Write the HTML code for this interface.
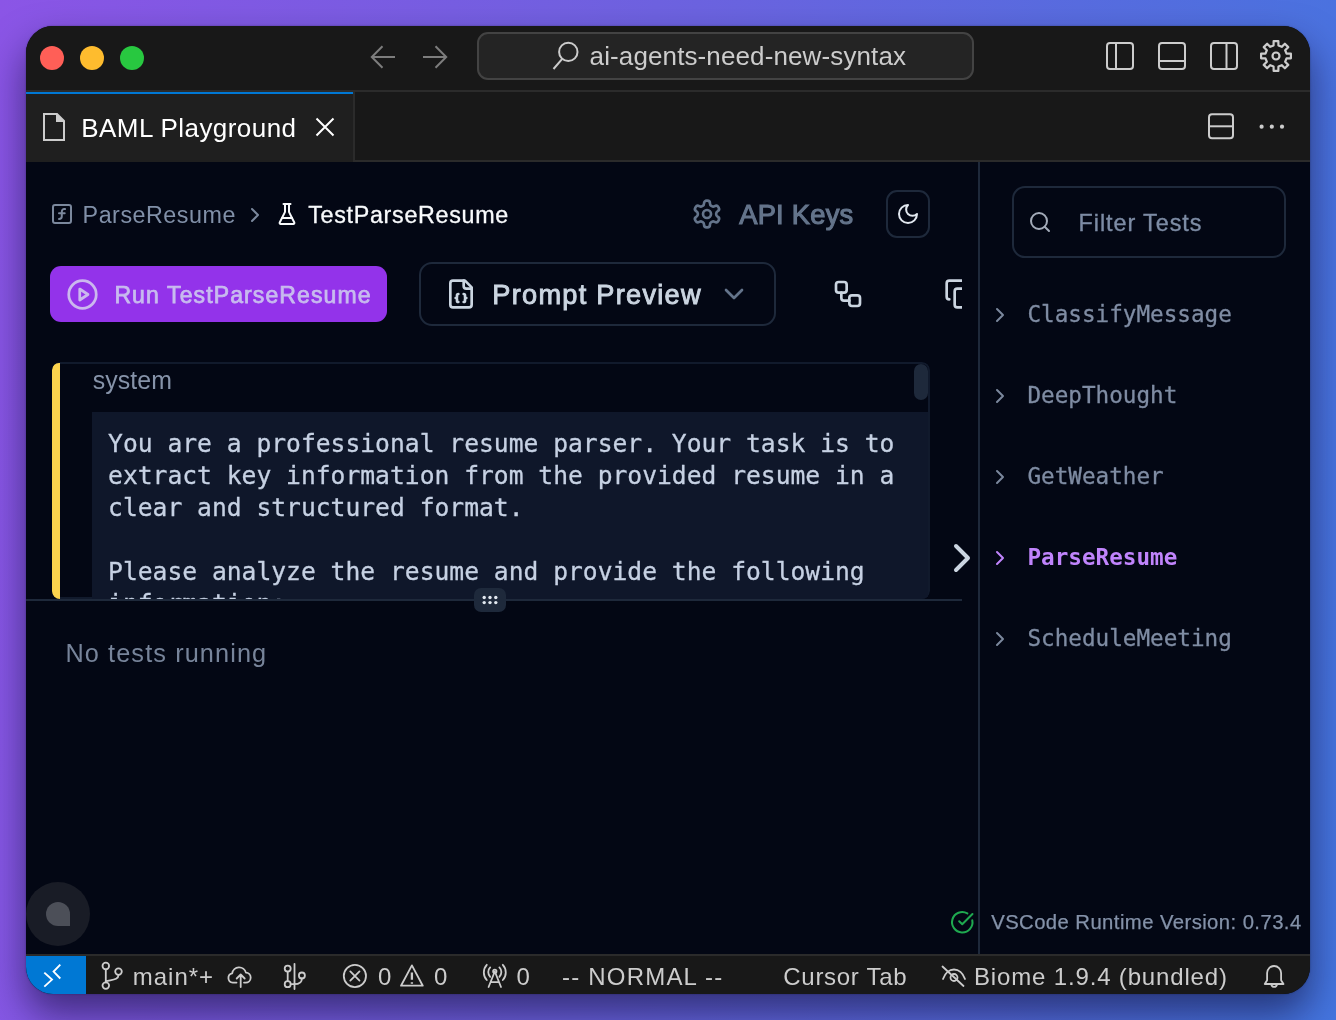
<!DOCTYPE html>
<html lang="en">
<head>
<meta charset="utf-8">
<title>BAML Playground</title>
<style>
*{box-sizing:border-box;margin:0;padding:0}
html,body{width:1336px;height:1020px;overflow:hidden}
body{position:relative;background:linear-gradient(97deg,#8b55e6 0%,#6e62e0 45%,#4475df 100%);font-family:"Liberation Sans",sans-serif}
.a{position:absolute}
.t{position:absolute;white-space:pre;display:block}
.win{position:absolute;left:26px;top:26px;width:1284px;height:968px;border-radius:27px;overflow:hidden;background:#030714;box-shadow:0 20px 38px rgba(10,5,40,.55),0 0 2px rgba(0,0,0,.35)}
.in{position:absolute;left:-26px;top:-26px;width:1336px;height:1020px;will-change:transform}
svg{position:absolute;overflow:visible}
.ic{fill:none;stroke:#cccccc;stroke-width:2;stroke-linecap:round;stroke-linejoin:round}
.lu{fill:none;stroke-width:2;stroke-linecap:round;stroke-linejoin:round}
</style>
</head>
<body>
<div class="win"><div class="in">

<!-- title bar -->
<div class="a" style="left:26px;top:26px;width:1284px;height:64px;background:#181818"></div>
<div class="a" style="left:26px;top:90px;width:1284px;height:2px;background:#2b2b2b"></div>
<div class="a" style="left:40px;top:46px;width:24px;height:24px;border-radius:50%;background:#ff5f57"></div>
<div class="a" style="left:80px;top:46px;width:24px;height:24px;border-radius:50%;background:#febc2e"></div>
<div class="a" style="left:120px;top:46px;width:24px;height:24px;border-radius:50%;background:#28c840"></div>
<!-- nav arrows -->
<svg style="left:366px;top:40px" width="90" height="34" viewBox="366 40 90 34"><g class="ic" style="stroke:#7d7d7d;stroke-linecap:butt;stroke-linejoin:miter"><path d="M395 57H372M382.500 46.300L371.800 57l10.700 10.700"/><path d="M423 57h23M435.500 46.300L446.200 57l-10.700 10.700"/></g></svg>
<!-- command center -->
<div class="a" style="left:477px;top:32px;width:497px;height:48px;border-radius:11px;background:#242424;border:2px solid #434343"></div>
<svg style="left:550px;top:40px" width="32" height="32" viewBox="550 40 32 32"><g class="ic" style="stroke-linecap:butt"><circle cx="568.300" cy="51.900" r="9.200"/><path d="M562.200 58.800L553.500 69"/></g></svg>
<!-- layout icons -->
<svg style="left:1100px;top:38px" width="200" height="36" viewBox="1100 38 200 36"><g class="ic" style="stroke-linecap:butt">
<rect x="1107" y="43" width="26" height="26" rx="3"/><path d="M1116 43v26"/>
<rect x="1159" y="43" width="26" height="26" rx="3"/><path d="M1159 61h26"/>
<rect x="1211" y="43" width="26" height="26" rx="3"/><path d="M1226.500 43v26"/>
</g></svg>
<svg style="left:1259.800px;top:39.800px" width="32" height="32" viewBox="0 0 32 32"><g class="ic" style="stroke-linejoin:round;stroke-width:2.200"><path d="M13.56 5.48 L13.64 1.09 L18.36 1.09 L18.44 5.48 L21.72 6.84 L24.88 3.78 L28.22 7.12 L25.16 10.28 L26.52 13.56 L30.91 13.64 L30.91 18.36 L26.52 18.44 L25.16 21.72 L28.22 24.88 L24.88 28.22 L21.72 25.16 L18.44 26.52 L18.36 30.91 L13.64 30.91 L13.56 26.52 L10.28 25.16 L7.12 28.22 L3.78 24.88 L6.84 21.72 L5.48 18.44 L1.09 18.36 L1.09 13.64 L5.48 13.56 L6.84 10.28 L3.78 7.12 L7.12 3.78 L10.28 6.84Z"/><circle cx="16" cy="16" r="3.500"/></g></svg>

<!-- tab bar -->
<div class="a" style="left:26px;top:92px;width:1284px;height:68px;background:#181818"></div>
<div class="a" style="left:26px;top:160px;width:1284px;height:2px;background:#2b2b2b"></div>
<div class="a" style="left:26px;top:92px;width:327px;height:70px;background:#1f1f1f;border-top:2px solid #0078d4"></div>
<div class="a" style="left:353px;top:92px;width:2px;height:68px;background:#2b2b2b"></div>
<!-- file icon -->
<svg style="left:40px;top:110px" width="30" height="34" viewBox="40 110 30 34"><g class="ic" style="stroke-linecap:butt;stroke-linejoin:miter"><path d="M44 114h13l7 7v19H44z"/><path d="M57 114v7h7" style="fill:#cccccc"/></g></svg>
<!-- close -->
<svg style="left:312px;top:114px" width="26" height="26" viewBox="312 114 26 26"><path class="ic" style="stroke:#ffffff;stroke-linecap:butt" d="M316.500 118.500l17 17M333.500 118.500l-17 17"/></svg>
<!-- split + more -->
<svg style="left:1204px;top:110px" width="90" height="34" viewBox="1204 110 90 34"><g class="ic" style="stroke-linecap:butt"><rect x="1209" y="114.300" width="24" height="24" rx="3"/><path d="M1209 126.300h24"/></g><g fill="#cccccc"><circle cx="1261.600" cy="126.700" r="2.100"/><circle cx="1271.800" cy="126.700" r="2.100"/><circle cx="1282" cy="126.700" r="2.100"/></g></svg>

<!-- content -->
<div class="a" style="left:26px;top:162px;width:1284px;height:792px;background:#030714"></div>
<div class="a" style="left:978px;top:162px;width:2px;height:792px;background:#1e293b"></div>

<!-- main panel (clipped at x=962) -->
<div class="a" style="left:26px;top:162px;width:936px;height:792px;overflow:hidden"><div class="a" style="left:-26px;top:-162px;width:1336px;height:1020px">
  <!-- breadcrumb icons -->
  <svg style="left:50px;top:202px" width="24" height="24" viewBox="0 0 24 24"><g class="lu" stroke="#7b889d"><rect width="18" height="18" x="3" y="3" rx="2" ry="2"/><path d="M9 17c2 0 2.800-1 2.800-2.800V10c0-2 1-3.300 3.200-3"/><path d="M9 11.200h5.700"/></g></svg>
  <svg style="left:242.900px;top:202.600px" width="24" height="24" viewBox="0 0 24 24"><path class="lu" stroke="#7b889d" d="m9 18 6-6-6-6"/></svg>
  <svg style="left:275.300px;top:202px" width="24" height="24" viewBox="0 0 24 24"><g class="lu" stroke="#f8fafc"><path d="M10 2v7.527a2 2 0 0 1-.211.896L4.720 20.550a1 1 0 0 0 .9 1.450h12.760a1 1 0 0 0 .9-1.450l-5.069-10.127A2 2 0 0 1 14 9.527V2"/><path d="M8.500 2h7"/><path d="M7 16h10"/></g></svg>
  <!-- api keys gear -->
  <svg style="left:691px;top:198px" width="32" height="32" viewBox="0 0 24 24"><g class="lu" stroke="#64748b"><path d="M12.220 2h-.44a2 2 0 0 0-2 2v.18a2 2 0 0 1-1 1.730l-.43.250a2 2 0 0 1-2 0l-.15-.080a2 2 0 0 0-2.730.730l-.22.380a2 2 0 0 0 .73 2.730l.15.100a2 2 0 0 1 1 1.720v.510a2 2 0 0 1-1 1.740l-.15.090a2 2 0 0 0-.73 2.730l.22.380a2 2 0 0 0 2.730.730l.15-.080a2 2 0 0 1 2 0l.43.250a2 2 0 0 1 1 1.730V20a2 2 0 0 0 2 2h.44a2 2 0 0 0 2-2v-.18a2 2 0 0 1 1-1.730l.43-.250a2 2 0 0 1 2 0l.15.080a2 2 0 0 0 2.730-.730l.22-.390a2 2 0 0 0-.73-2.730l-.15-.080a2 2 0 0 1-1-1.740v-.500a2 2 0 0 1 1-1.740l.15-.090a2 2 0 0 0 .73-2.730l-.22-.380a2 2 0 0 0-2.730-.730l-.15.080a2 2 0 0 1-2 0l-.43-.250a2 2 0 0 1-1-1.730V4a2 2 0 0 0-2-2z"/><circle cx="12" cy="12" r="3"/></g></svg>
  <!-- moon button -->
  <div class="a" style="left:886px;top:190px;width:44px;height:48px;border:2px solid #1e293b;border-radius:11px"></div>
  <svg style="left:895.600px;top:201.800px" width="24" height="24" viewBox="0 0 24 24"><path class="lu" stroke="#e2e8f0" d="M12 3a6 6 0 0 0 9 9 9 9 0 1 1-9-9Z"/></svg>
  <!-- run button -->
  <div class="a" style="left:50px;top:266px;width:337px;height:56px;border-radius:11px;background:#9333ea"></div>
  <svg style="left:65.500px;top:277.500px" width="33" height="33" viewBox="0 0 24 24"><g class="lu" stroke="#cbb8ee"><circle cx="12" cy="12" r="10"/><polygon points="10 8 16 12 10 16 10 8"/></g></svg>
  <!-- prompt preview button -->
  <div class="a" style="left:419px;top:262px;width:357px;height:64px;border:2px solid #1e293b;border-radius:13px"></div>
  <svg style="left:445.100px;top:277.700px" width="32" height="32" viewBox="0 0 24 24"><g class="lu" stroke="#cbd5e1"><path d="M15 2H6a2 2 0 0 0-2 2v16a2 2 0 0 0 2 2h12a2 2 0 0 0 2-2V7Z"/><path d="M14 2v4a2 2 0 0 0 2 2h4"/><path d="M10 12a1 1 0 0 0-1 1v1a1 1 0 0 1-1 1 1 1 0 0 1 1 1v1a1 1 0 0 0 1 1"/><path d="M14 18a1 1 0 0 0 1-1v-1a1 1 0 0 1 1-1 1 1 0 0 1-1-1v-1a1 1 0 0 0-1-1"/></g></svg>
  <svg style="left:718.200px;top:277.700px" width="32" height="32" viewBox="0 0 24 24"><path class="lu" stroke="#64748b" d="m6 9 6 6 6-6"/></svg>
  <!-- workflow + copy -->
  <svg style="left:832.200px;top:278px" width="32" height="32" viewBox="0 0 24 24"><g class="lu" stroke="#cbd5e1"><rect width="8" height="8" x="3" y="3" rx="2"/><path d="M7 11v4a2 2 0 0 0 2 2h4"/><rect width="8" height="8" x="13" y="13" rx="2"/></g></svg>
  <svg style="left:943.700px;top:277.700px" width="32" height="32" viewBox="0 0 24 24"><g class="lu" stroke="#cbd5e1"><rect width="14" height="14" x="8" y="8" rx="2" ry="2"/><path d="M4 16c-1.100 0-2-.9-2-2V4c0-1.100.9-2 2-2h10c1.100 0 2 .9 2 2"/></g></svg>

  <!-- prompt card -->
  <div class="a" style="left:52px;top:362px;width:878px;height:237px;border-radius:8px;overflow:hidden;background:#030714">
    <div class="a" style="left:0;top:0;width:878px;height:237px;border:2px solid #111a2c;border-radius:8px"></div>
    <div class="a" style="left:0;top:1px;width:8px;height:237px;background:#fcd34d;border-radius:7px 0 0 7px"></div>
    <div class="a" style="left:40px;top:50px;width:836px;height:200px;background:#0f172a"></div>
    <div class="a" style="left:0;top:0;width:876px;height:300px;overflow:hidden">
<span class="t" style="left:56.10px;top:63px;font:400 24.657px/37px 'DejaVu Sans Mono', 'Liberation Mono', monospace;color:#c6d1e3;-webkit-text-stroke:.3px #c6d1e3">You are a professional resume parser. Your task is to</span>
<span class="t" style="left:56.10px;top:95px;font:400 24.657px/37px 'DejaVu Sans Mono', 'Liberation Mono', monospace;color:#c6d1e3;-webkit-text-stroke:.3px #c6d1e3">extract key information from the provided resume in a</span>
<span class="t" style="left:56.10px;top:127px;font:400 24.657px/37px 'DejaVu Sans Mono', 'Liberation Mono', monospace;color:#c6d1e3;-webkit-text-stroke:.3px #c6d1e3">clear and structured format.</span>
<span class="t" style="left:56.10px;top:191px;font:400 24.657px/37px 'DejaVu Sans Mono', 'Liberation Mono', monospace;color:#c6d1e3;-webkit-text-stroke:.3px #c6d1e3">Please analyze the resume and provide the following</span>
<span class="t" style="left:56.10px;top:223px;font:400 24.657px/37px 'DejaVu Sans Mono', 'Liberation Mono', monospace;color:#c6d1e3;-webkit-text-stroke:.3px #c6d1e3">information:</span>
    </div>
    <div class="a" style="left:862px;top:2px;width:14px;height:36px;border-radius:7px;background:#1e293b"></div>
  </div>
  <!-- separator -->
  <div class="a" style="left:26px;top:599px;width:936px;height:2px;background:#1e293b"></div>
  <div class="a" style="left:474px;top:588px;width:32px;height:24px;border-radius:7px;background:#1e293b"></div>
  <svg style="left:474px;top:588px" width="32" height="24" viewBox="474 588 32 24"><g fill="#e2e8f0"><circle cx="484.200" cy="597.500" r="1.700"/><circle cx="490" cy="597.500" r="1.700"/><circle cx="495.800" cy="597.500" r="1.700"/><circle cx="484.200" cy="602.600" r="1.700"/><circle cx="490" cy="602.600" r="1.700"/><circle cx="495.800" cy="602.600" r="1.700"/></g></svg>
  <!-- chat bubble -->
  <div class="a" style="left:26.200px;top:881.800px;width:64px;height:64px;border-radius:50%;background:#191c26"></div>
  <div class="a" style="left:46.200px;top:902.100px;width:24px;height:24px;border-radius:12px 12px 0 12px;background:#4c4f58"></div>
</div></div>

<!-- big chevron -->
<svg style="left:938px;top:534px" width="48" height="48" viewBox="0 0 24 24"><path class="lu" stroke="#cbd5e1" d="m9 18 6-6-6-6"/></svg>
<!-- check -->
<svg style="left:950px;top:910px" width="24.500" height="24.500" viewBox="0 0 24 24"><g class="lu" stroke="#1fa950"><path d="M21.801 10A10 10 0 1 1 17 3.335"/><path d="m9 11 3 3L22 4"/></g></svg>

<!-- right panel -->
<div class="a" style="left:1012px;top:186px;width:274px;height:72px;border:2px solid #1e293b;border-radius:13px"></div>
<svg style="left:1028px;top:210px" width="24" height="24" viewBox="0 0 24 24"><g class="lu" stroke="#a3abb9"><circle cx="11" cy="11" r="8"/><path d="m21 21-4.300-4.300"/></g></svg>
<svg style="left:988.200px;top:303.400px" width="24" height="24" viewBox="0 0 24 24"><path class="lu" stroke="#7b889d" d="m9 18 6-6-6-6"/></svg>
<svg style="left:988.200px;top:384.400px" width="24" height="24" viewBox="0 0 24 24"><path class="lu" stroke="#7b889d" d="m9 18 6-6-6-6"/></svg>
<svg style="left:988.200px;top:465.400px" width="24" height="24" viewBox="0 0 24 24"><path class="lu" stroke="#7b889d" d="m9 18 6-6-6-6"/></svg>
<svg style="left:988.200px;top:546.200px" width="24" height="24" viewBox="0 0 24 24"><path class="lu" stroke="#c084fc" d="m9 18 6-6-6-6"/></svg>
<svg style="left:988.200px;top:627.300px" width="24" height="24" viewBox="0 0 24 24"><path class="lu" stroke="#7b889d" d="m9 18 6-6-6-6"/></svg>
<span class="t" style="left:1027.5px;top:297px;font:400 22.639px/34px 'DejaVu Sans Mono', 'Liberation Mono', monospace;color:#7f8ca3;-webkit-text-stroke:0.3px #7f8ca3">ClassifyMessage</span>
<span class="t" style="left:1027.5px;top:378px;font:400 22.639px/34px 'DejaVu Sans Mono', 'Liberation Mono', monospace;color:#7f8ca3;-webkit-text-stroke:0.3px #7f8ca3">DeepThought</span>
<span class="t" style="left:1027.5px;top:459px;font:400 22.639px/34px 'DejaVu Sans Mono', 'Liberation Mono', monospace;color:#7f8ca3;-webkit-text-stroke:0.3px #7f8ca3">GetWeather</span>
<span class="t" style="left:1027.5px;top:540px;font:700 22.639px/34px 'DejaVu Sans Mono', 'Liberation Mono', monospace;color:#c084fc;-webkit-text-stroke:0px #c084fc">ParseResume</span>
<span class="t" style="left:1027.5px;top:621px;font:400 22.639px/34px 'DejaVu Sans Mono', 'Liberation Mono', monospace;color:#7f8ca3;-webkit-text-stroke:0.3px #7f8ca3">ScheduleMeeting</span>

<!-- status bar -->
<div class="a" style="left:26px;top:954px;width:1284px;height:2px;background:#2b2b2b"></div>
<div class="a" style="left:26px;top:956px;width:1284px;height:38px;background:#181818"></div>
<div class="a" style="left:26px;top:956px;width:60px;height:38px;background:#0078d4"></div>
<svg style="left:26px;top:956px" width="1284" height="38" viewBox="26 956 1284 38">
<g class="ic" style="stroke:#ffffff;stroke-width:1.900;stroke-linecap:butt;stroke-linejoin:miter"><path d="M44.300 972.600l7.700 7-7.700 7"/><path d="M60.300 964.700l-6.700 6.900 6.700 6.900"/></g>
<g class="ic" style="stroke-width:1.800">
<!-- branch -->
<circle cx="105.800" cy="966" r="3.300"/><circle cx="105.800" cy="985.600" r="3.300"/><circle cx="118.500" cy="971.600" r="3.300"/><path d="M105.800 969.300v13M118.500 974.900c0 5-6.500 4.800-12.700 6.600"/>
<!-- cloud upload -->
<path d="M236.500 982.600h-3.700a4.700 4.700 0 0 1-.600-9.300a7 7 0 0 1 13.700-.700a5 5 0 0 1-.400 10h-1.500"/><path d="M240.700 987v-12M236.700 978.500l4-4 4 4"/>
<!-- graph -->
<circle cx="287.700" cy="968.600" r="3"/><circle cx="287.700" cy="984.200" r="3"/><circle cx="301.900" cy="975.500" r="3"/><path d="M287.700 971.600v9.600M294.500 963.800v25.200M301.900 978.500c0 4-3 5.700-7.400 5.700h-3.800"/>
<!-- error -->
<circle cx="354.900" cy="976" r="11.100"/><path d="M350.300 971.400l9.200 9.200M359.500 971.400l-9.200 9.200"/>
<!-- warning -->
<path d="M411.900 965.400l10.900 20.300h-21.800z"/><path d="M411.900 972.500v7.300M411.900 982.200v1.600" style="stroke-width:2.300;stroke-linecap:butt"/>
<!-- radio tower -->
<path d="M488.600 987l6.200-15.500 6.200 15.500M491 982.200h7.600"/><circle cx="494.800" cy="971.300" r="1.700"/><path d="M490.200 976.800a6.600 6.600 0 0 1 0-9.400M499.400 967.400a6.600 6.600 0 0 1 0 9.400M486.800 980a11.200 11.200 0 0 1 0-15.200M502.800 964.800a11.200 11.200 0 0 1 0 15.200"/>
<!-- eye closed -->
<path d="M942.500 966.500l21 19.500"/><path d="M943 979c2-6 6.500-9.500 11-9.500s9 3.500 11 9.500"/><circle cx="954" cy="977.500" r="3.500"/>
<!-- bell -->
<path d="M1264.800 984h18.700l-2.400-3.800v-7.200a7 7 0 0 0-14 0v7.200z"/><path d="M1271.300 984.500a2.900 2.900 0 0 0 5.700 0"/>
</g>
</svg>

<span class="t" style="left:589.60px;top:37px;font:400 26px/38px 'Liberation Sans', sans-serif;color:#cccccc;letter-spacing:0.116px;">ai-agents-need-new-syntax</span>
<span class="t" style="left:81.30px;top:109px;font:400 26px/38px 'Liberation Sans', sans-serif;color:#ffffff;letter-spacing:0.436px;">BAML Playground</span>
<span class="t" style="left:82.60px;top:198px;font:400 23.3px/34px 'Liberation Sans', sans-serif;color:#8190a8;letter-spacing:0.515px;">ParseResume</span>
<span class="t" style="left:308.20px;top:198px;font:400 23.3px/34px 'Liberation Sans', sans-serif;color:#f8fafc;letter-spacing:0.695px;-webkit-text-stroke:0.3px #f8fafc;">TestParseResume</span>
<span class="t" style="left:739.20px;top:195px;font:400 27.3px/39px 'Liberation Sans', sans-serif;color:#64748b;letter-spacing:0.255px;-webkit-text-stroke:1.1px #64748b;">API Keys</span>
<span class="t" style="left:114.40px;top:278px;font:400 23px/34px 'Liberation Sans', sans-serif;color:#c8bbef;letter-spacing:1.117px;-webkit-text-stroke:0.75px #c8bbef;">Run TestParseResume</span>
<span class="t" style="left:492.30px;top:275px;font:400 27.2px/39px 'Liberation Sans', sans-serif;color:#cbd5e1;letter-spacing:1.266px;-webkit-text-stroke:0.9px #cbd5e1;">Prompt Preview</span>
<span class="t" style="left:92.70px;top:362px;font:400 24.9px/36px 'Liberation Sans', sans-serif;color:#8693a9;letter-spacing:0.101px;">system</span>
<span class="t" style="left:65.40px;top:635px;font:400 25.3px/36px 'Liberation Sans', sans-serif;color:#77849a;letter-spacing:1.104px;">No tests running</span>
<span class="t" style="left:1078.60px;top:206px;font:400 23.4px/34px 'Liberation Sans', sans-serif;color:#7d8ca5;letter-spacing:0.921px;-webkit-text-stroke:0.35px #7d8ca5;">Filter Tests</span>
<span class="t" style="left:991.20px;top:907px;font:400 20.3px/30px 'Liberation Sans', sans-serif;color:#8492a9;letter-spacing:0.426px;-webkit-text-stroke:0.25px #8492a9;">VSCode Runtime Version: 0.73.4</span>
<span class="t" style="left:132.70px;top:959px;font:400 24px/35px 'Liberation Sans', sans-serif;color:#cccccc;letter-spacing:1.008px;">main*+</span>
<span class="t" style="left:377.90px;top:959px;font:400 24px/35px 'Liberation Sans', sans-serif;color:#cccccc;letter-spacing:0.000px;">0</span>
<span class="t" style="left:434.00px;top:959px;font:400 24px/35px 'Liberation Sans', sans-serif;color:#cccccc;letter-spacing:0.000px;">0</span>
<span class="t" style="left:516.40px;top:959px;font:400 24px/35px 'Liberation Sans', sans-serif;color:#cccccc;letter-spacing:0.000px;">0</span>
<span class="t" style="left:562.10px;top:959px;font:400 24px/35px 'Liberation Sans', sans-serif;color:#cccccc;letter-spacing:1.192px;">-- NORMAL --</span>
<span class="t" style="left:783.30px;top:959px;font:400 24px/35px 'Liberation Sans', sans-serif;color:#cccccc;letter-spacing:0.708px;">Cursor Tab</span>
<span class="t" style="left:974.00px;top:959px;font:400 24px/35px 'Liberation Sans', sans-serif;color:#cccccc;letter-spacing:0.842px;">Biome 1.9.4 (bundled)</span>
</div></div>
</body>
</html>
